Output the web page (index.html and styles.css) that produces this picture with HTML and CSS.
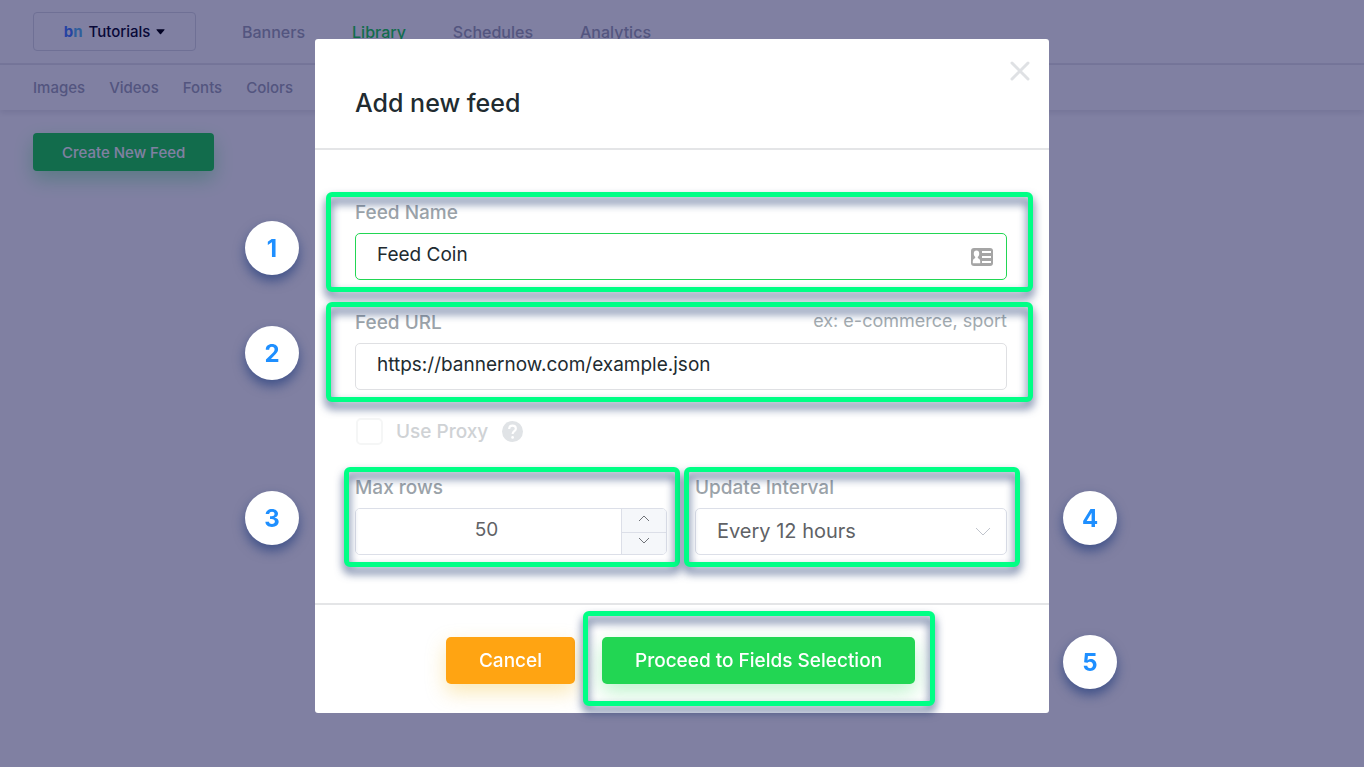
FILE: index.html
```html
<!DOCTYPE html>
<html lang="en">
<head>
<meta charset="utf-8">
<title>Add new feed</title>
<link rel="stylesheet" href="styles.css">
</head>
<body>
<header class="topbar">
  <button class="account" type="button">
    <span class="brand"><span class="brand-b">b</span><span class="brand-n">n</span></span>
    <span>Tutorials</span>
    <svg class="caret" viewBox="0 0 10 6" aria-hidden="true"><path d="M1 0h8q1 0 .4.8L5.6 5.2q-.6.6-1.200 0L.6.8Q0 0 1 0z"/></svg>
  </button>
  <nav class="main-nav">
    <a href="#banners">Banners</a>
    <a class="active" href="#library">Library</a>
    <a href="#schedules">Schedules</a>
    <a href="#analytics">Analytics</a>
  </nav>
</header>
<nav class="sub-nav">
  <a href="#images">Images</a>
  <a href="#videos">Videos</a>
  <a href="#fonts">Fonts</a>
  <a href="#colors">Colors</a>
</nav>
<main class="page">
  <button class="create" type="button">Create New Feed</button>
</main>

<div class="overlay">
  <form class="dialog" role="dialog" aria-labelledby="dialog-title">
    <div class="dialog-head">
      <h1 id="dialog-title">Add new feed</h1>
      <button class="close" type="button" aria-label="Close">
        <svg viewBox="0 0 20 20"><path d="M2 2l16 16M18 2L2 18"/></svg>
      </button>
    </div>

    <div class="dialog-body">
      <div class="field">
        <label for="feed-name">Feed Name</label>
        <div class="control">
          <input class="box focused" id="feed-name" type="text" value="Feed Coin">
          <svg class="card-icon" viewBox="0 0 24 20" aria-hidden="true">
            <rect x="1" y="1" width="22" height="18" rx="3" fill="#a5a5a5"/>
            <g fill="#fff"><ellipse cx="6.500" cy="6.800" rx="2.700" ry="3.200"/><path d="M5.200 9h2.600v2q2.400.8 2.400 3v2.200H2.800V14Q2.800 11.800 5.200 11z"/>
            <path d="M12 4h9v2h-9zM12 9h9v2h-9zM12 14h9v2h-9z"/></g>
          </svg>
        </div>
        <span class="highlight"></span>
        <span class="step step-left step-first">1</span>
      </div>

      <div class="field">
        <div class="label-row">
          <label for="feed-url">Feed URL</label>
          <span class="hint">ex: e-commerce, sport</span>
        </div>
        <input class="box" id="feed-url" type="text" value="https://bannernow.com/example.json">
        <span class="highlight"></span>
        <span class="step step-left">2</span>
      </div>

      <div class="proxy">
        <input id="proxy" type="checkbox" disabled>
        <label for="proxy">Use Proxy</label>
        <svg class="help" viewBox="0 0 20 20" aria-hidden="true"><circle cx="10" cy="10" r="10"/><path d="M6.800 7.600C6.800 5.600 8.200 4.400 10 4.400s3.200 1.200 3.200 2.900c0 2.300-3.100 2.500-3.100 5"/><circle class="dot" cx="10.100" cy="15.600" r="1.300"/></svg>
      </div>

      <div class="pair">
        <div class="field field-small">
          <label for="max-rows">Max rows</label>
          <div class="number">
            <input id="max-rows" type="text" inputmode="numeric" value="50">
            <div class="spin">
              <button type="button" aria-label="Increase"><svg viewBox="0 0 12 7"><path d="M1 6l5-5 5 5"/></svg></button>
              <button type="button" aria-label="Decrease"><svg viewBox="0 0 12 7"><path d="M1 1l5 5 5-5"/></svg></button>
            </div>
          </div>
          <span class="highlight"></span>
          <span class="step step-left">3</span>
        </div>
        <div class="field field-small">
          <label for="interval">Update Interval</label>
          <div class="control">
            <select class="box" id="interval"><option>Every 12 hours</option></select>
            <svg class="chevron" viewBox="0 0 16 10" aria-hidden="true"><path d="M1 1l7 7 7-7"/></svg>
          </div>
          <span class="highlight"></span>
          <span class="step step-right">4</span>
        </div>
      </div>
    </div>

    <div class="dialog-foot">
      <button class="action cancel" type="button">Cancel</button>
      <div class="proceed-wrap">
        <button class="action proceed" type="submit">Proceed to Fields Selection</button>
        <span class="highlight"></span>
      </div>
      <span class="step step-foot">5</span>
    </div>
  </form>
</div>
</body>
</html>
```

FILE: styles.css
```css
* {
  box-sizing: border-box;
}

body {
  margin: 0;
  min-height: 100vh;
  background: #fff;
  color: #212b30;
  font-family: Inter, "Liberation Sans", sans-serif;
  font-size: 19px;
}

button,
input,
select {
  margin: 0;
  font: inherit;
  color: inherit;
}

button {
  cursor: pointer;
}

a {
  color: inherit;
  text-decoration: none;
}

/* Page behind the dialog */
.topbar {
  display: flex;
  align-items: center;
  gap: 46px;
  padding: 12px 33px;
  border-bottom: 2px solid #e9eaee;
}

.account {
  display: flex;
  align-items: center;
  justify-content: center;
  gap: 6px;
  width: 163px;
  height: 39px;
  border: 1px solid #dcdee4;
  border-radius: 4px;
  background: none;
  color: #10102a;
  font-size: 15px;
  font-weight: 500;
}

.brand {
  font-weight: 700;
}

.brand-b {
  color: #4a84ff;
}

.brand-n {
  color: #5cbcf2;
}

.caret {
  width: 9px;
  height: 6px;
}

.main-nav {
  display: flex;
  gap: 47px;
  color: #a5a8b8;
  font-size: 16px;
  font-weight: 500;
}

.main-nav .active {
  color: #22d653;
}

.sub-nav {
  display: flex;
  align-items: center;
  gap: 24px;
  height: 45px;
  padding: 0 33px;
  box-shadow: 0 3px 6px rgba(20, 20, 50, 0.1);
  color: #a5a8b8;
  font-size: 15px;
  font-weight: 500;
}

.page {
  padding: 23px 33px;
}

.create {
  height: 38px;
  padding: 0 29px;
  border: 0;
  border-radius: 4px;
  background: #22d653;
  box-shadow: 0 8px 20px rgba(34, 214, 83, 0.35);
  color: #fff;
  font-size: 15px;
  font-weight: 500;
}

/* Dialog */
.overlay {
  position: fixed;
  inset: 0;
  overflow: auto;
  padding: 39px 16px;
  background: rgba(2, 2, 70, 0.5);
}

.dialog {
  position: relative;
  max-width: 734px;
  margin: 0 auto;
  border-radius: 3px;
  background: #fff;
}

.dialog-head {
  display: flex;
  align-items: flex-start;
  justify-content: space-between;
  padding: 22px 19px 29px 40px;
  border-bottom: 2px solid #e4e5e7;
}

.dialog-head h1 {
  margin: 26px 0 0;
  font-size: 25px;
  font-weight: 500;
  line-height: 32px;
}

.close {
  padding: 0;
  border: 0;
  background: none;
  line-height: 0;
}

.close svg {
  width: 20px;
  height: 20px;
  stroke: #dfe1e4;
  stroke-width: 3;
  stroke-linecap: round;
}

.dialog-body {
  display: flex;
  flex-direction: column;
  gap: 33px;
  padding: 53px 42px 48px 40px;
}

.field {
  position: relative;
  display: flex;
  flex-direction: column;
  gap: 10px;
}

.field label {
  color: #9ba3a9;
  font-weight: 500;
  line-height: 20px;
}

.label-row {
  display: flex;
  justify-content: space-between;
}

.hint {
  color: #a3abb0;
  font-size: 18px;
  line-height: 16px;
}

.control {
  position: relative;
}

.box {
  display: block;
  width: 100%;
  height: 47px;
  padding: 0 21px 4px;
  border: 1px solid #dfe0e3;
  border-radius: 5px;
  outline: 0;
  background: #fff;
}

.focused {
  border-color: #22d653;
}

select.box {
  appearance: none;
  padding: 0 21px 2px;
  border-color: #dcdfe8;
  color: #606266;
  font-size: 20px;
}

.card-icon {
  position: absolute;
  top: 14px;
  right: 13px;
  width: 24px;
  height: 20px;
}

.chevron {
  position: absolute;
  top: 19px;
  right: 16px;
  width: 16px;
  height: 10px;
  fill: none;
  stroke: #c0c4cc;
}

.proxy {
  display: flex;
  align-items: center;
  margin: -5px 0 0 1px;
  color: #cfd2d5;
  font-weight: 500;
}

.proxy input {
  appearance: none;
  width: 27px;
  height: 27px;
  margin-right: 13px;
  border: 2px solid #f5f6f6;
  border-radius: 5px;
}

.help {
  width: 21px;
  height: 21px;
  margin-left: 14px;
  fill: #e0e3e6;
}

.help path {
  fill: none;
  stroke: #fff;
  stroke-width: 2;
}

.help .dot {
  fill: #fff;
}

.pair {
  display: grid;
  grid-template-columns: repeat(2, minmax(0, 1fr));
  gap: 28px;
}

.number {
  display: flex;
  height: 47px;
  overflow: hidden;
  border: 1px solid #dcdfe8;
  border-radius: 5px;
}

.number input {
  flex: 1;
  min-width: 0;
  padding: 0 4px 4px 0;
  border: 0;
  outline: 0;
  background: #fff;
  color: #606266;
  text-align: center;
}

.spin {
  display: grid;
  grid-template-rows: 1fr 1fr;
  width: 45px;
  border-left: 1px solid #dcdfe8;
  background: #f5f7fa;
}

.spin button {
  padding: 0 0 3px;
  border: 0;
  background: none;
  line-height: 0;
}

.spin button + button {
  padding-bottom: 6px;
  border-top: 1px solid #dcdfe8;
}

.spin svg {
  width: 12px;
  height: 7px;
  fill: none;
  stroke: #707379;
}

.dialog-foot {
  position: relative;
  display: flex;
  justify-content: center;
  gap: 27px;
  padding: 32px 3px 29px 0;
  border-top: 2px solid #e4e5e7;
}

.action {
  height: 47px;
  padding: 0 33px;
  border: 0;
  border-radius: 5px;
  color: #fff;
  font-weight: 500;
}

.cancel {
  background: #ffa412;
  box-shadow: 0 8px 20px rgba(240, 190, 40, 0.35);
}

.proceed {
  background: #22d653;
  box-shadow: 0 8px 20px rgba(34, 214, 83, 0.3);
}

.proceed-wrap {
  position: relative;
}

/* Tutorial annotations drawn over the form */
.highlight {
  position: absolute;
  inset: -11px -26px -12px -29px;
  border: 5px solid #00ff85;
  border-radius: 6px;
  filter: drop-shadow(0 6px 5px rgba(20, 48, 105, 0.8));
  pointer-events: none;
}

.field-small .highlight {
  inset: -11px -13px -12px -11px;
}

.proceed-wrap .highlight {
  inset: -26px -20px -22px -19px;
}

.step {
  position: absolute;
  display: grid;
  place-items: center;
  width: 54px;
  height: 54px;
  border-radius: 50%;
  background: #fff;
  box-shadow: 0 6px 12px rgba(20, 50, 120, 0.6);
  color: #1e8fff;
  font-size: 24px;
  font-weight: 700;
}

.step-left {
  top: 13px;
  left: -110px;
}

.step-first {
  top: 18px;
}

.step-right {
  top: 13px;
  right: -110px;
}

.step-foot {
  top: 30px;
  right: -68px;
}
```
